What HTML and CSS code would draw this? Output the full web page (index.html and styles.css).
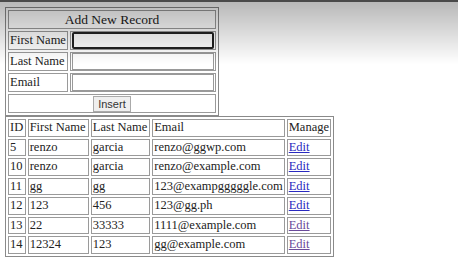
FILE: index.html
```html
<!DOCTYPE html>
<html lang="en">
  <head>
    <meta charset="UTF-8" />
    <meta name="viewport" content="width=device-width, initial-scale=1.0" />
    <title>Records</title>
    <link rel="stylesheet" href="styles.css">
  </head>
  <body>
    <!-- Add form -->
    <form id="add-record">
      <table class="grid form-table">
        <tr class="title-row">
          <td colspan="2">Add New Record</td>
        </tr>
        <tr>
          <td class="label">First Name</td>
          <td><input type="text" name="fname" class="field focused" /></td>
        </tr>
        <tr>
          <td class="label">Last Name</td>
          <td><input type="text" name="lname" class="field" /></td>
        </tr>
        <tr>
          <td class="label">Email</td>
          <td><input type="text" name="email" class="field" /></td>
        </tr>
        <tr>
          <td colspan="2" class="center"><button type="button" class="btn">Insert</button></td>
        </tr>
      </table>
    </form>

    <!-- Records list -->
    <table class="grid records">
      <tr>
        <td class="c-id">ID</td>
        <td class="c-first">First Name</td>
        <td class="c-last">Last Name</td>
        <td class="c-email">Email</td>
        <td class="c-manage">Manage</td>
      </tr>
      <tr><td>5</td><td>renzo</td><td>garcia</td><td>renzo@ggwp.com</td><td><a href="#">Edit</a></td></tr>
      <tr><td>10</td><td>renzo</td><td>garcia</td><td>renzo@example.com</td><td><a href="#">Edit</a></td></tr>
      <tr><td>11</td><td>gg</td><td>gg</td><td>123@exampgggggle.com</td><td><a href="#">Edit</a></td></tr>
      <tr><td>12</td><td>123</td><td>456</td><td>123@gg.ph</td><td><a href="#">Edit</a></td></tr>
      <tr><td>13</td><td>22</td><td>33333</td><td>1111@example.com</td><td><a href="#" class="visited">Edit</a></td></tr>
      <tr><td>14</td><td>12324</td><td>123</td><td>gg@example.com</td><td><a href="#" class="visited">Edit</a></td></tr>
    </table>

    <div class="shade"></div>
  </body>
</html>
```
FILE: styles.css
```css
body {
  margin: 7px 5px;
  font-family: "Liberation Serif", "Times New Roman", serif;
  font-size: 12.5px;
  color: #222;
  background: #fff;
}

form {
  margin: 0;
}

.grid {
  border: 1px solid #8a8a8a;
  border-spacing: 2px;
}

.grid td {
  border: 1px solid #9a9a9a;
  padding: 0 1px;
  line-height: 15px;
}

.form-table {
  width: 213px;
}

.form-table td {
  height: 17px;
}

.form-table .label {
  width: 56px;
  white-space: nowrap;
}

.title-row td {
  text-align: center;
  font-size: 13.5px;
}

.center {
  text-align: center;
}

.field {
  box-sizing: border-box;
  width: 142px;
  height: 17px;
  margin: 0;
  border: 1px solid #999;
  padding: 0 2px;
  display: block;
}

.field.focused {
  border: 2px solid #222;
  border-radius: 2px;
}

.btn {
  font-family: "Liberation Sans", Arial, sans-serif;
  font-size: 11px;
  padding: 0 4px;
  height: 16px;
  background: #efefef;
  border: 1px solid #aaa;
  color: #333;
}

.records {
  width: 329px;
  margin-top: 0;
}

.records td {
  height: 15.5px;
  white-space: nowrap;
}

.c-id {
  width: 14px;
}

.c-first {
  width: 58px;
}

.c-last {
  width: 56px;
}

a {
  color: #2a2ac0;
}

a.visited {
  color: #6a4a9a;
}

.shade {
  position: fixed;
  top: 0;
  left: 0;
  right: 0;
  height: 62px;
  pointer-events: none;
  border-top: 2px solid #4a4a4a;
  background: linear-gradient(rgba(0, 0, 0, 0.28), rgba(0, 0, 0, 0));
}
```
